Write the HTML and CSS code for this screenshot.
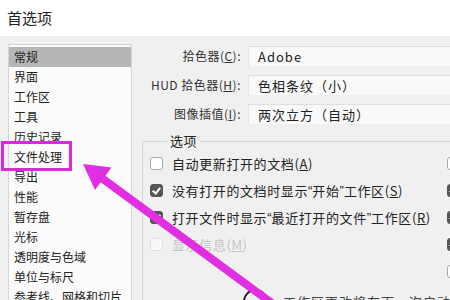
FILE: index.html
```html
<!DOCTYPE html>
<html lang="zh">
<head>
<meta charset="utf-8">
<link rel="stylesheet" href="styles.css">
</head>
<body>
<div class="title">首选项</div>
<div class="content">
  <ul class="nav">
    <li class="sel">常规</li>
    <li>界面</li>
    <li>工作区</li>
    <li>工具</li>
    <li>历史记录</li>
    <li>文件处理</li>
    <li>导出</li>
    <li>性能</li>
    <li>暂存盘</li>
    <li>光标</li>
    <li>透明度与色域</li>
    <li>单位与标尺</li>
    <li>参考线、网格和切片</li>
  </ul>
  <div class="main">
    <div class="form">
      <div class="label">拾色器(<u>C</u>):</div>
      <div class="select">Adobe</div>
      <div class="label">HUD 拾色器(<u>H</u>):</div>
      <div class="select">色相条纹（小）</div>
      <div class="label">图像插值(<u>I</u>):</div>
      <div class="select">两次立方（自动）</div>
    </div>
    <fieldset class="group">
      <legend>选项</legend>
      <div class="grid">
        <div class="col">
          <div class="opt"><span class="cb"></span>自动更新打开的文档(<u>A</u>)</div>
          <div class="opt"><span class="cb on"></span>没有打开的文档时显示<span class="q">“</span>开始<span class="q">”</span>工作区(<u>S</u>)</div>
          <div class="opt"><span class="cb on"></span>打开文件时显示<span class="q">“</span>最近打开的文件<span class="q">”</span>工作区(<u>R</u>)</div>
          <div class="opt dis"><span class="cb"></span>显示信息(<u>M</u>)</div>
        </div>
        <div class="col">
          <div class="opt"><span class="cb"></span></div>
          <div class="opt"><span class="cb on"></span></div>
          <div class="opt"><span class="cb on"></span></div>
          <div class="opt"><span class="cb on"></span></div>
          <div class="opt"><span class="cb"></span></div>
        </div>
      </div>
      <div class="note"><span class="info"></span>工作区更改将在下一次启动 Photoshop 时生效。</div>
    </fieldset>
  </div>
</div>
<svg class="annot" width="450" height="300" viewBox="0 0 450 300">
  <rect x="2.5" y="142.5" width="68" height="27" fill="none" stroke="#d82ad8" stroke-width="3"/>
  <line x1="101" y1="177.5" x2="292" y2="318" stroke="#e22ee2" stroke-width="8"/>
  <polygon points="83,164 111.5,167.5 95,190" fill="#e22ee2"/>
</svg>
</body>
</html>
```
FILE: styles.css
```css
html, body {
  margin: 0;
  padding: 0;
}
body {
  width: 450px;
  height: 300px;
  overflow: hidden;
  background: #f0f0f0;
  font-family: "Noto Sans CJK SC", "Noto Sans", sans-serif;
  color: #222;
  position: relative;
}
.title {
  height: 36px;
  line-height: 36px;
  background: #fff;
  padding-left: 7px;
  font-size: 15px;
  color: #222;
}
.content {
  display: flex;
  padding: 8px 0 0 8px;
}
.nav {
  list-style: none;
  margin: 0;
  padding: 2px 0 0 0;
  width: 122px;
  height: 300px;
  background: #fbfbfb;
  border: 1px solid #d6d6d6;
  flex: none;
}
.nav li {
  height: 20px;
  line-height: 20px;
  padding-left: 5px;
  font-size: 12px;
  white-space: nowrap;
}
.nav li.sel {
  background: #b6b6b6;
}
.main {
  margin-left: 10px;
  padding-top: 2px;
  flex: 1;
  min-width: 0;
}
.form {
  display: grid;
  grid-template-columns: 99px 1fr;
  column-gap: 7px;
  row-gap: 9px;
}
.label {
  text-align: right;
  font-size: 12px;
  letter-spacing: 0.5px;
  line-height: 20px;
  color: #333;
  white-space: nowrap;
}
.select {
  height: 19px;
  line-height: 19px;
  background: #f9f9f9;
  border-top: 1px solid #dedede;
  border-left: 1px solid #e4e4e4;
  padding-left: 9px;
  font-size: 13px;
  letter-spacing: 1px;
  color: #222;
  white-space: nowrap;
  margin-right: -20px;
}
.group {
  margin: 8px -30px 0 0;
  padding: 0 0 0 7px;
  border: 1px solid #d4d4d4;
  border-radius: 2px;
  min-width: 0;
}
.group legend {
  font-size: 13px;
  line-height: 18px;
  padding: 0 3px;
  margin-left: 17px;
  letter-spacing: 0.5px;
  color: #222;
}
.grid {
  display: grid;
  grid-template-columns: 297px auto;
}
.col {
  min-width: 0;
}
.opt {
  height: 27px;
  display: flex;
  align-items: center;
  font-size: 13px;
  letter-spacing: 0.6px;
  white-space: nowrap;
  color: #222;
}
.q {
  font-family: "Liberation Sans", sans-serif;
  letter-spacing: 0;
}
.opt.dis {
  color: #c4c4c4;
}
.cb {
  width: 11px;
  height: 11px;
  border: 1px solid #a8a8a8;
  border-radius: 3px;
  background: #fff;
  margin-right: 9px;
  flex: none;
  position: relative;
}
.cb.on {
  background: #555;
  border-color: #555;
}
.cb.on::after {
  content: "";
  position: absolute;
  left: 3px;
  top: 1px;
  width: 3px;
  height: 6px;
  border-right: 2px solid #fff;
  border-bottom: 2px solid #fff;
  transform: rotate(40deg);
}
.opt.dis .cb {
  border-color: #e0e0e0;
  background: #f8f8f8;
}
.note {
  display: flex;
  align-items: center;
  margin: 4px 0 0 93px;
  font-size: 13px;
  letter-spacing: 1px;
  color: #444;
  white-space: nowrap;
}
.info {
  width: 21px;
  height: 21px;
  border: 2px solid #222;
  border-radius: 50%;
  margin-right: 15px;
  flex: none;
}
.annot {
  position: absolute;
  left: 0;
  top: 0;
  pointer-events: none;
}
```
